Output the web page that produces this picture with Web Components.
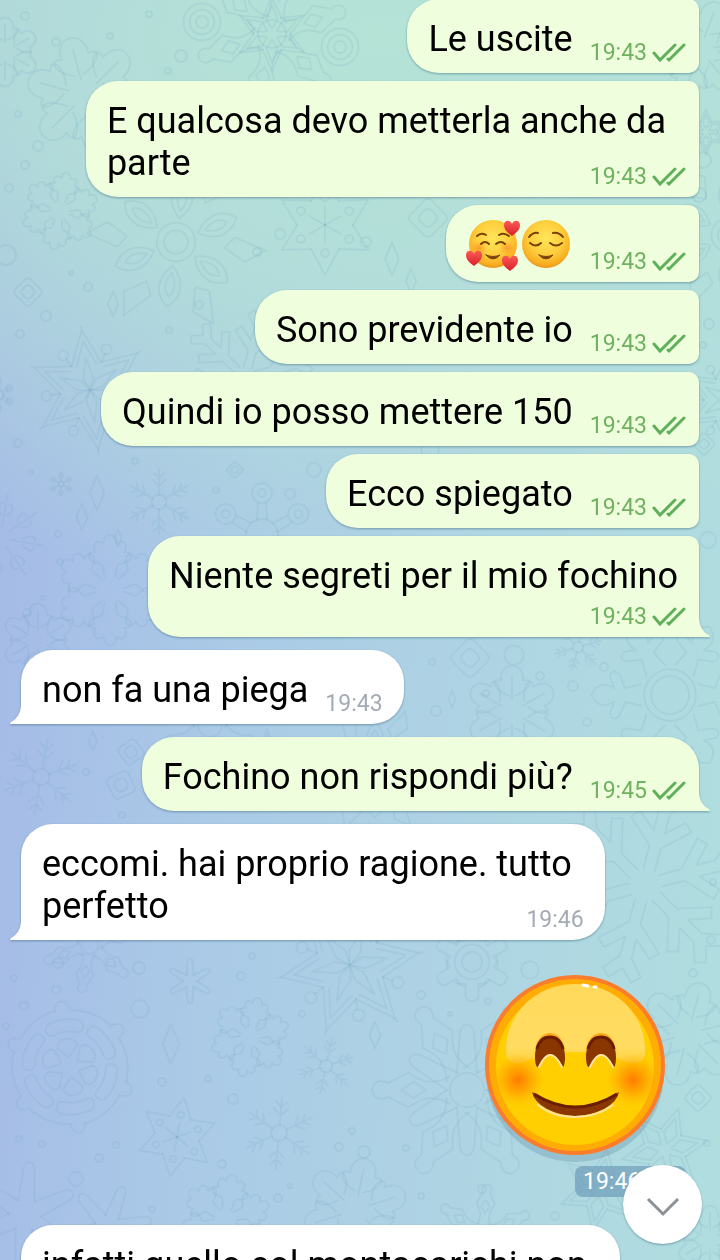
<!DOCTYPE html>
<html lang="it">
<head>
<meta charset="utf-8">
<meta name="viewport" content="width=device-width, initial-scale=1">
<title>Chat</title>
<style>
body { margin: 0; font-family: Roboto, "Noto Sans", sans-serif; }
</style>
</head>
<body>
<chat-screen>
  <chat-message out>Le uscite<chat-time slot="time" read>19:43</chat-time></chat-message>
  <chat-message out><span slot="lead">E qualcosa devo metterla anche da</span>parte<chat-time slot="time" read>19:43</chat-time></chat-message>
  <chat-message out><chat-emoji name="hearts"></chat-emoji><chat-emoji name="relieved"></chat-emoji><chat-time slot="time" read>19:43</chat-time></chat-message>
  <chat-message out>Sono previdente io<chat-time slot="time" read>19:43</chat-time></chat-message>
  <chat-message out>Quindi io posso mettere 150<chat-time slot="time" read>19:43</chat-time></chat-message>
  <chat-message out>Ecco spiegato<chat-time slot="time" read>19:43</chat-time></chat-message>
  <chat-message out below tail>Niente segreti per il mio fochino<chat-time slot="time" read>19:43</chat-time></chat-message>
  <chat-message tail>non fa una piega<chat-time slot="time">19:43</chat-time></chat-message>
  <chat-message out tail alone>Fochino non rispondi più?<chat-time slot="time" read>19:45</chat-time></chat-message>
  <chat-message tail><span slot="lead">eccomi. hai proprio ragione. tutto</span>perfetto<chat-time slot="time">19:46</chat-time></chat-message>
  <chat-sticker><chat-time slot="time" read>19:46</chat-time></chat-sticker>
  <chat-message><span slot="lead">infatti quello col montacarichi non</span></chat-message>
</chat-screen>

<script>
class ChatWallpaper extends HTMLElement {
  connectedCallback() {
    const root = this.attachShadow({ mode: 'open' });
    const spin = (n, d) => Array.from({ length: n }, (_, i) => `<g transform="rotate(${i * 360 / n})">${d}</g>`).join('');
    // Each doodle is drawn around its own centre, about 50 units in radius.
    const shapes = {
      lobes: spin(6, '<path d="M-5-12C-7-22-5-24-12-25C-22-27-22-36-13-35C-18-42-12-48-6-43C-6-54 6-54 6-43C12-48 18-42 13-35C22-36 22-27 12-25C5-24 7-22 5-12"/>'),
      petals: '<circle r="8"/><circle r="13"/>' + spin(6, '<path d="M0-16C-11-27-8-38 0-44C8-38 11-27 0-16ZM0-21C-5-29-3-34 0-37C3-34 5-29 0-21M16-29L12-38 28-54 30-38Z"/>'),
      twigs: '<circle r="11"/>' + spin(6, '<path d="M0-11V-50M0-24L-10-34M0-24L10-34M0-36L-8-44M0-36L8-44"/>'),
      outline: '<circle r="14"/><circle r="19"/>' + spin(6, '<path d="M-8-21L-5-33-15-37C-20-41-16-46-10-43L-5-41C-10-50-7-54 0-58C7-54 10-50 5-41L10-43C16-46 20-41 15-37L5-33 8-21"/>'),
      gear: '<circle r="14"/><circle r="24"/>' + spin(6, '<path d="M-18-30H-9V-48C-9-56 9-56 9-48V-30H18M-12-34A36 36 0 0 0-24-26"/>'),
      star: spin(6, '<path d="M-13-22L0-52 13-22M-8-20L0-40 8-20 0-8Z"/>'),
      bigstar: spin(6, '<path d="M-15-26L0-60 15-26M-10-25L0-49 10-25M-5-12L0-33 5-12 0 0Z"/><path d="M0-60V-64M15-26L20-34"/><circle cx="22" cy="-38" r="5"/>'),
      dots: spin(6, '<path d="M-14-24L0-50 14-24M0 0V-18"/><circle cy="-28" r="4"/>'),
      wheel: spin(6, '<path d="M-6-47C-6-58 6-58 6-47A48 48 0 0 1 38-30M-12-38A40 40 0 0 1 12-38C18-36 16-26 10-28A30 30 0 0 0-10-28C-16-26-18-36-12-38ZM0-8L-8-17C-9-26 9-26 8-17Z"/>'),
      leaf: spin(6, '<path d="M-4-18C-20-24-24-38-12-34C-14-56 14-56 12-34C24-38 20-24 4-18M0-14V-40"/>'),
      knobs: '<circle r="10"/>' + spin(6, '<path d="M-8-10C-4-16-4-24-7-29L-10-34-4-46C-10-58 10-58 4-46L10-34 7-29C4-24 4-16 8-10M0-38L-5-31 0-24 5-31Z"/>'),
      cross: spin(6, '<path d="M-7-12L-5-38C-5-48 5-48 5-38L7-12"/>'),
      burst: spin(8, '<path d="M0-12V-48M-3-25C-9-31-9-38-3-38M3-25C9-31 9-38 3-38"/>'),
      rings: '<circle r="16"/>' + spin(6, '<circle cy="-42" r="10"/><circle cy="-42" r="4"/><path d="M-4-32L-5-15M4-32L5-15"/>'),
      fir: spin(6, '<path d="M-3-8L-3-20-16-32-12-36-3-28V-38L-10-46-6-50 0-44 6-50 10-46 3-38V-28L12-36 16-32 3-20V-8"/>'),
      square: '<rect x="-34" y="-34" width="68" height="68" rx="12" transform="rotate(45)"/><rect x="-18" y="-18" width="36" height="36" rx="12" transform="rotate(45)"/>',
      gem: '<path d="M0-48L20 0 0 48-20 0Z"/>',
      ball: '<circle r="44"/>'
    };
    const placed = [
      ['lobes',60,211,38,10],['petals',176,242,74,8],['leaf',85,95,58,-15],['leaf',5,52,34,0],['knobs',272,34,70,12],['ball',202,22,21,0],['ball',202,22,14,0],['ball',202,22,7,0],['ball',340,47,21,0],['ball',340,47,14,0],['ball',340,47,7,0],
      ['star',272,34,36,0],['bigstar',90,390,50,-8],['twigs',159,502,33,0],['burst',0,538,46,10],['lobes',110,590,54,0],['fir',245,378,68,15],['rings',262,535,50,0],['gem',97,493,18,0],['gem',82,517,14,0],['gem',118,538,9,0],['twigs',61,484,12,0],
      ['square',28,292,16,0],['gem',113,304,13,0],['dots',325,225,50,0],['square',428,218,22,0],['gem',392,259,17,0],['gem',411,281,13,0],['rings',-2,395,16,0],['leaf',700,50,50,20],['petals',728,235,64,0],['star',706,132,22,0],['bigstar',728,400,40,0],['square',704,444,12,0],
      ['outline',670,695,68,30],['leaf',512,712,46,0],['square',470,658,22,0],['ball',514,655,11,0],['twigs',578,647,24,14],['gem',452,699,9,0],['twigs',41,777,38,10],['knobs',210,725,60,0],['square',131,752,15,10],['square',121,785,17,20],['gem',93,741,10,0],['leaf',38,640,36,0],['star',267,752,22,0],['petals',375,770,54,0],
      ['fir',645,885,98,15],['knobs',90,945,44,10],['cross',190,981,25,0],['lobes',250,1037,39,12],['wheel',70,1067,60,-8],['dots',177,1137,40,10],['twigs',279,1133,36,5],['twigs',326,1066,28,12],['bigstar',350,965,58,20],['gear',472,962,36,0],['knobs',467,1090,86,30],['cross',467,1090,72,0],['gem',171,1044,21,0],['gem',375,1035,14,0],['ball',140,1009,10,0],['ball',530,970,10,0],
      ['leaf',688,1034,52,15],['square',698,1098,15,0],['star',665,1150,42,18],['star',600,1190,40,10],['leaf',355,1210,52,12],['lobes',225,1220,45,10],['cross',25,1215,58,5],['cross',108,1228,48,20],['knobs',483,1235,46,5],['ball',76,1179,8,0],['leaf',710,1240,34,0],['square',235,470,9,0],['ball',314,470,8,0],['twigs',430,450,40,0]
    ];
    const dots = [[25,16,4],[56,42,4],[110,36,3],[149,14,3],[181,56,6],[168,71,3],[18,114,3],[38,146,5],[25,165,4],[9,188,4],[6,255,10],[71,273,2],[88,287,4],[46,316,5],[280,234,5],[366,242,5],[257,252,4],[199,305,4],[20,334,4],[169,330,3],[135,461,3],[31,472,2],[18,443,4],[216,490,3],[290,494,5],[58,534,3],[60,562,3],[27,613,4],[43,598,2],[708,540,8],[604,667,4],[573,686,5],[540,676,4],[587,722,4],[486,693,3],[436,711,5],[432,662,3],[86,772,3],[122,815,3],[58,963,5],[139,968,6],[14,978,3],[56,990,4],[24,1006,4],[6,1026,3],[252,956,3],[241,976,4],[302,1014,3],[162,1082,4],[208,1079,3],[233,1099,5],[222,1164,4],[116,1145,3],[99,1158,4],[42,1144,3],[19,1139,3],[339,1147,4],[352,1131,3],[364,1152,6],[406,1148,3],[278,1198,4],[290,1186,2],[152,1209,3],[421,995,4],[488,1001,3],[450,1014,2],[421,1196,3],[482,1189,4],[707,1143,3],[693,973,4],[713,882,3],[711,940,4],[555,1216,4],[703,160,8],[699,195,7],[703,345,3],[709,324,5]];
    root.innerHTML = `
      <style>
        :host { display: block; pointer-events: none;
          background:
            radial-gradient(ellipse 115% 44% at 52% 3%, #b5e3d6 0%, #b4e1d7cc 45%, #b4e1d700 100%),
            linear-gradient(94deg, #a4b9e7 0%, #aacae6 34%, #aed2e4 60%, #b0dedf 100%); }
        svg { display: block; width: 100%; height: 100%; }
      </style>
      <svg viewBox="0 0 720 1260" preserveAspectRatio="xMidYMin slice" aria-hidden="true">
        <g fill="none" stroke="#6b9fbe" stroke-opacity=".15" stroke-width="2" stroke-linejoin="round" stroke-linecap="round">
          ${placed.map(([n, x, y, r, a]) => `<g transform="translate(${x} ${y}) rotate(${a}) scale(${r / 50})" stroke-width="${90 / r}">${shapes[n]}</g>`).join('')}
          ${dots.map(([x, y, r]) => `<circle cx="${x}" cy="${y}" r="${r}"/>`).join('')}
        </g>
      </svg>`;
  }
}

class ChatScreen extends HTMLElement {
  connectedCallback() {
    this.attachShadow({ mode: 'open' }).innerHTML = `
      <style>
        :host { display: block; position: relative; height: 100vh; overflow: hidden; }
        chat-wallpaper { position: absolute; inset: 0; }
        main { position: relative; display: flex; flex-direction: column; align-items: flex-start; margin-top: -1px; padding: 0 21px; }
        scroll-down { position: absolute; right: 18px; bottom: 16px; }
      </style>
      <chat-wallpaper></chat-wallpaper>
      <main><slot></slot></main>
      <scroll-down></scroll-down>`;
  }
}

class ChatMessage extends HTMLElement {
  connectedCallback() {
    this.attachShadow({ mode: 'open' }).innerHTML = `
      <style>
        :host { display: grid; position: relative; box-sizing: border-box; flex: none;
          grid-template-columns: auto auto; column-gap: 17px; align-items: end;
          max-width: 100%; margin-bottom: 8px; padding: 19px 21px 7px;
          border-radius: 32px; background: #fff; color: #000;
          font-size: 36px; line-height: 42px;
          filter: drop-shadow(0 1px 1px rgba(50, 95, 115, .5)); }
        :host([out]) { align-self: flex-end; background: #efffde; border-radius: 32px 10px 10px 32px; --time: #70b15f; }
        :host([out]) .time { margin-right: -8px; }
        :host([tail]) { margin-bottom: 13px; border-bottom-left-radius: 0; }
        :host([out][tail]) { border-bottom-left-radius: 32px; border-bottom-right-radius: 0; }
        :host([alone]) { border-top-right-radius: 32px; }
        :host([below]) { grid-template-columns: auto; }
        .lead { display: block; grid-column: 1 / -1; }
        .lead::slotted(*) { display: block; padding-right: 12px; }
        .text { margin-bottom: 6px; }
        .time { justify-self: end; }
        .tail { display: none; position: absolute; bottom: 0; right: 100%; width: 11px; height: 20px; fill: #fff; }
        :host([tail]) .tail { display: block; }
        :host([out]) .tail { right: auto; left: 100%; fill: #efffde; transform: scaleX(-1); }
      </style>
      <slot class="lead" name="lead"></slot>
      <div class="text"><slot></slot></div>
      <div class="time"><slot name="time"></slot></div>
      <svg class="tail" viewBox="0 0 11 20" aria-hidden="true"><path d="M11 0C11 9 7 15 1 18Q-1 20 1 20H11Z"/></svg>`;
  }
}

class ChatTime extends HTMLElement {
  connectedCallback() {
    this.attachShadow({ mode: 'open' }).innerHTML = `
      <style>
        :host { display: flex; align-items: center; gap: 5px; font-size: 23px; line-height: 27px; color: var(--time, #a3abb4); }
        svg { display: none; width: 34px; height: 20px; fill: none; stroke: var(--check, #5fb058); stroke-width: 3; stroke-linecap: round; }
        :host([read]) svg { display: block; }
      </style>
      <slot></slot>
      <svg viewBox="0 0 34 20" role="img" aria-label="Letto"><path d="M2 10L8 17 23 2M16 16L17 17 32 2"/></svg>`;
  }
}

class ChatEmoji extends HTMLElement {
  connectedCallback() {
    const heart = (x, y) => `<path stroke="none" transform="translate(${x} ${y})" fill="url(#h)" d="M0 8C-4 5-8 2-8-3C-8-8-2-9 0-4C2-9 8-8 8-3C8 2 4 5 0 8Z"/>`;
    const mouth = '<path d="M19 31Q26 39 33 31Q26 34 19 31Z" fill="#7a4306" stroke-width="1"/>';
    const faces = {
      hearts: ['Faccina con cuori', `
        <ellipse stroke="none" cx="12" cy="24" rx="8" ry="7" fill="url(#b)"/><ellipse stroke="none" cx="40" cy="24" rx="8" ry="7" fill="url(#b)"/>
        <path d="M10 12Q14 8 19 11M32 11Q37 8 42 12"/><path d="M14 20Q18 16 22 20M29 20Q34 16 38 20"/>${mouth}
        ${heart(45, 4)}${heart(7, 34)}${heart(43, 39)}`],
      relieved: ['Faccina sollevata', `
        <path d="M9 13Q13 8 18 9M33 9Q39 8 43 13"/><path d="M10 19Q16 24 21 19M30 19Q36 24 42 19"/>${mouth}`]
    };
    const [label, art] = faces[this.getAttribute('name')];
    this.attachShadow({ mode: 'open' }).innerHTML = `
      <style>
        :host { display: inline-block; vertical-align: top; height: 45px; }
        svg { display: block; overflow: visible; width: 53px; height: 45px; }
      </style>
      <svg viewBox="0 0 53 45" role="img" aria-label="${label}">
        <defs>
          <radialGradient id="f" cx=".5" cy=".38" r=".64"><stop offset="0" stop-color="#ffe55a"/><stop offset=".55" stop-color="#fdce3c"/><stop offset=".85" stop-color="#f8ae23"/><stop offset="1" stop-color="#e58f1a"/></radialGradient>
          <radialGradient id="b"><stop offset="0" stop-color="#ff7a20" stop-opacity=".6"/><stop offset="1" stop-color="#ff8a20" stop-opacity="0"/></radialGradient>
          <linearGradient id="h" x2="0" y2="1"><stop offset="0" stop-color="#fb5a55"/><stop offset="1" stop-color="#d91f2c"/></linearGradient>
        </defs>
        <circle cx="26" cy="20" r="24" fill="url(#f)"/>
        <g fill="none" stroke="#7a4306" stroke-width="2" stroke-linecap="round">${art}</g>
      </svg>`;
  }
}

class ChatSticker extends HTMLElement {
  connectedCallback() {
    this.attachShadow({ mode: 'open' }).innerHTML = `
      <style>
        :host { display: flex; flex-direction: column; align-items: flex-end; align-self: flex-end; margin: 22px 13px 28px 0; }
        .art { display: block; width: 181px; height: 191px; margin-right: 20px; overflow: visible; }
        .pill { padding: 2px 0 2px 8px; border-radius: 8px; background: rgba(100, 146, 178, .6); --time: #fff; --check: #fff; width: 103px; }
      </style>
      <svg class="art" viewBox="0 0 181 191" role="img" aria-label="Faccina sorridente">
        <defs>
          <radialGradient id="c"><stop offset="0" stop-color="#ff7a00"/><stop offset=".45" stop-color="#ff9200" stop-opacity=".65"/><stop offset="1" stop-color="#ffb000" stop-opacity="0"/></radialGradient>
          <clipPath id="clip"><circle cx="90" cy="90" r="87"/></clipPath>
          <linearGradient id="s" x2="0" y2="1"><stop offset="0" stop-color="#ffd95a"/><stop offset=".8" stop-color="#ffdc62"/><stop offset="1" stop-color="#ffd54a" stop-opacity=".8"/></linearGradient>
        </defs>
        <circle cx="90" cy="98" r="89" fill="#5888a2" opacity=".3"/>
        <circle cx="90" cy="90" r="88" fill="#ffad05" stroke="#fa7d2d" stroke-width="4"/>
        <circle cx="90" cy="91" r="79" fill="#ffcf02"/>
        <path d="M21 77C20 39 51 9 90 9C130 9 161 39 160 77Q160 88 148 88C138 88 130 80 110 78Q90 76 70 78C50 80 42 88 32 88Q21 88 21 77Z" fill="url(#s)"/>
        <g clip-path="url(#clip)"><circle cx="33" cy="105" r="27" fill="url(#c)"/><circle cx="148" cy="105" r="27" fill="url(#c)"/></g>
        <path d="M50 82C48 50 82 50 80 82Q79 95 75 89Q65 70 55 89Q51 95 50 82Z" fill="#ffa91a"/>
        <path d="M101 82C99 50 133 50 131 82Q130 95 126 89Q116 70 106 89Q102 95 101 82Z" fill="#ffa91a"/>
        <g fill="#893600" stroke-linejoin="round">
          <path d="M50 84C49 54 81 54 80 84Q79 95 77 91Q65 67 54 91Q51 95 50 84Z"/>
          <path d="M101 84C100 54 132 54 131 84Q130 95 128 91Q116 67 105 91Q102 95 101 84Z"/>
          <path d="M47 117Q90 146 134 117Q132 127 119 134Q90 148 62 134Q49 127 47 117Z"/>
        </g>
        <path d="M52 74Q55 62 65 62Q75 62 78 74M103 74Q106 62 116 62Q126 62 129 74M49 119Q90 145 132 119" fill="none" stroke="#6a1d00" stroke-width="3"/>
        <path d="M54 92Q65 68 77 92M105 92Q116 68 128 92M53 130Q68 142 90 142Q112 142 128 130" fill="none" stroke="#ffe3a0" stroke-width="2" stroke-linecap="round"/>
        <path d="M98 10L103 11M109 12L111 12" fill="none" stroke="#fff" stroke-width="3" stroke-linecap="round"/>
      </svg>
      <div class="pill"><slot name="time"></slot></div>`;
  }
}

class ScrollDown extends HTMLElement {
  connectedCallback() {
    this.attachShadow({ mode: 'open' }).innerHTML = `
      <style>
        :host { display: block; }
        button { display: grid; place-items: center; width: 79px; height: 79px; padding: 4px 0 0; border: 0; border-radius: 50%; background: #fff; box-shadow: 0 1px 2px rgba(50, 95, 115, .5); cursor: pointer; }
        svg { width: 34px; height: 20px; fill: none; stroke: #8c9196; stroke-width: 3; }
      </style>
      <button type="button" aria-label="Vai in fondo"><svg viewBox="0 0 34 20" aria-hidden="true"><path d="M2 2L17 17 32 2"/></svg></button>`;
  }
}

customElements.define('chat-wallpaper', ChatWallpaper);
customElements.define('scroll-down', ScrollDown);
customElements.define('chat-screen', ChatScreen);
customElements.define('chat-time', ChatTime);
customElements.define('chat-emoji', ChatEmoji);
customElements.define('chat-message', ChatMessage);
customElements.define('chat-sticker', ChatSticker);
</script>
</body>
</html>
